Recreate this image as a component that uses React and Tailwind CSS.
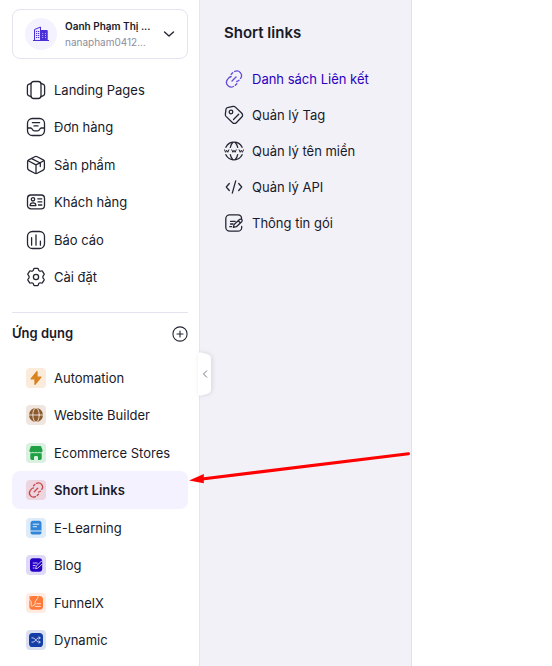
import React from "react";

function Icon({ children, size = "size-5", className = "" }) {
  return (
    <svg
      viewBox="0 0 20 20"
      fill="none"
      stroke="currentColor"
      strokeWidth="1.3"
      strokeLinecap="round"
      strokeLinejoin="round"
      className={`${size} shrink-0 ${className}`}
    >
      {children}
    </svg>
  );
}

const LinkShape = () => (
  <>
    <path d="M7.200 5.200 8.700 3.700M10.600 2.500a4.700 4.700 0 0 1 6 6.900M15 11.300a4.700 4.700 0 0 1-2.200 1.200" />
    <path d="M12.800 14.800 11.300 16.300M9.400 17.500a4.700 4.700 0 0 1-6-6.900L5 8.700a4.700 4.700 0 0 1 2.200-1.200" />
    <path d="m8 12 4-4" />
  </>
);

const NoteShape = () => (
  <>
    <path d="M17.600 5.500A3.800 3.800 0 0 0 13.900 1.800H5.700A3.900 3.900 0 0 0 1.800 5.700v8.600a3.900 3.900 0 0 0 3.900 3.900h8.200a3.800 3.800 0 0 0 3.800-3.800v-.9" />
    <path d="M6.500 8.300h4.700M6.500 11h2.500M5.800 13.700h1.800" />
    <path d="m9.400 14.300.7-2.900 5.400-4.900a1.500 1.500 0 0 1 2.200 2.200l-5.300 5-3 .6ZM14.200 7.800l2 2" />
  </>
);

const mainItems = [
  {
    label: "Landing Pages",
    icon: (
      <>
        <rect x="5" y="1.500" width="10" height="17" rx="2.800" />
        <path d="M5 3.300 2.600 4.300a2.100 2.100 0 0 0-1.200 1.900v7.600a2.100 2.100 0 0 0 1.200 1.900L5 16.700M15 3.300l2.400 1a2.100 2.100 0 0 1 1.200 1.900v7.600a2.100 2.100 0 0 1-1.200 1.900l-2.400 1" />
      </>
    ),
  },
  {
    label: "Đơn hàng",
    icon: (
      <>
        <rect x="1.500" y="1.500" width="17" height="17" rx="4.800" />
        <path d="M1.500 11h3.200c.8 0 1.200.5 1.600 1.200.5 1.100 1.100 1.700 2.100 1.700h3.200c1 0 1.600-.6 2.100-1.700.4-.7.800-1.200 1.600-1.200h3.200M6.400 5.700h7.200M8 8.900h4" />
      </>
    ),
  },
  {
    label: "Sản phẩm",
    icon: (
      <>
        <path d="M8.800 1.700a2.500 2.500 0 0 1 2.400 0l6 3.200a2.200 2.200 0 0 1 1.200 2v6.200a2.200 2.200 0 0 1-1.200 2l-6 3.200a2.500 2.500 0 0 1-2.400 0l-6-3.200a2.200 2.200 0 0 1-1.200-2V6.900a2.200 2.200 0 0 1 1.200-2z" />
        <path d="m2.200 5.700 7.800 4.200 7.800-4.200M10 9.900v8.400M5.700 3.600l8.600 4.400v3.600" />
      </>
    ),
  },
  {
    label: "Khách hàng",
    icon: (
      <>
        <rect x="1.500" y="3" width="17" height="13.800" rx="3.400" />
        <circle cx="7" cy="7.300" r="1.700" />
        <path d="M4.100 13.600c0-1.800 1-2.700 2.900-2.700s2.900.9 2.900 2.700zM11.800 6.800h4M12 9.900h3.800M12.500 13h3.300" />
      </>
    ),
  },
  {
    label: "Báo cáo",
    icon: (
      <>
        <rect x="1.500" y="1.500" width="17" height="17" rx="4.800" />
        <path d="M5.600 7.600v7.600M10 5v10.200M14.400 11.200v4" />
      </>
    ),
  },
  {
    label: "Cài đặt",
    icon: (
      <>
        <circle cx="10" cy="10" r="2.600" />
        <path d="M8.500 1.400h3c.5 0 .7.300.8.800.3 1.700 1.500 2.400 3.100 1.800.5-.2.900-.1 1.100.3l1.600 2.600c.2.500.1.800-.3 1.100-1.300 1.100-1.300 2.900 0 4 .4.300.5.600.3 1.100l-1.600 2.600c-.2.400-.6.500-1.100.3-1.600-.6-2.800.1-3.100 1.800-.1.500-.3.800-.8.800h-3c-.5 0-.7-.3-.8-.8-.3-1.700-1.500-2.400-3.100-1.800-.5.200-.9.100-1.100-.3l-1.600-2.600c-.2-.5-.1-.8.300-1.100 1.300-1.100 1.300-2.900 0-4-.4-.3-.5-.6-.3-1.100l1.600-2.600c.2-.4.600-.5 1.100-.3 1.600.6 2.800-.1 3.100-1.800.1-.5.300-.8.800-.8Z" />
      </>
    ),
  },
];

const appItems = [
  {
    label: "Automation",
    tile: "bg-[#faebda] text-[#d9821f]",
    icon: <path d="m11 3.700-5.900 7.100h3.900v5.500l5.900-7.100H11z" fill="currentColor" />,
  },
  {
    label: "Website Builder",
    tile: "bg-[#f0e6df] text-[#8d5a2e]",
    icon: (
      <>
        <circle cx="10" cy="10" r="7" fill="currentColor" stroke="none" />
        <g stroke="#f0e6df" strokeWidth="0.900">
          <ellipse cx="10" cy="10" rx="3.200" ry="7" />
          <path d="M3 10h14" />
        </g>
      </>
    ),
  },
  {
    label: "Ecommerce Stores",
    tile: "bg-[#daf0e0] text-[#1fa045]",
    icon: (
      <g fill="currentColor" stroke="none">
        <path d="M6 3h8c.8 0 1.200.4 1.400 1.100L16.500 7c.4 1.300-.5 2.500-1.800 2.500-.8 0-1.300-.3-1.600-.8-.3.500-.8.800-1.500.8s-1.300-.3-1.600-.8c-.3.500-.9.800-1.600.8s-1.200-.3-1.500-.8c-.3.500-.8.800-1.600.8C4 9.500 3.100 8.300 3.500 7l1.100-2.900C4.800 3.400 5.200 3 6 3Z" />
        <path d="M4.300 10.300c1.100.1 1.900 0 2.600-.5 1 .7 2.100.7 3.100 0 1 .7 2.100.7 3.100 0 .7.500 1.500.6 2.600.5v4.900c0 1.100-.6 1.700-1.700 1.700h-2v-2.600c0-.9-.7-1.400-2-1.400s-2 .5-2 1.400v2.600H6c-1.100 0-1.700-.6-1.700-1.700z" />
      </g>
    ),
  },
  {
    label: "Short Links",
    selected: true,
    tile: "bg-[#ecd5df] text-[#c8454b]",
    icon: <g strokeWidth="1.400" transform="translate(1.200 1.200) scale(.88)"><LinkShape /></g>,
  },
  {
    label: "E-Learning",
    tile: "bg-[#deebf8] text-[#3186d8]",
    icon: (
      <>
        <path d="M7 2.800h6a2.500 2.500 0 0 1 2.500 2.500v7.200h-11V5.300A2.500 2.500 0 0 1 7 2.800Z" fill="currentColor" stroke="none" />
        <path d="M4.500 13.600h11v.8a2 2 0 0 1-2 2h-7a2 2 0 0 1-2-2z" fill="currentColor" stroke="none" />
        <path d="M7.200 6.200h5.600M7.200 8.700h3.400" stroke="#deebf8" strokeWidth="1" />
      </>
    ),
  },
  {
    label: "Blog",
    tile: "bg-[#ded9f6] text-[#2600c4]",
    icon: (
      <>
        <rect x="4" y="3.200" width="12.200" height="13.600" rx="3" fill="currentColor" stroke="none" />
        <path d="M7.200 8h4M7.200 10.500h2M7.200 13h1" stroke="#ded9f6" strokeWidth="0.900" />
        <path d="m9.700 13.400.6-2.400 5-4.700 2 1.700-5.200 4.800z" stroke="#ded9f6" strokeWidth="0.900" fill="currentColor" />
      </>
    ),
  },
  {
    label: "FunnelX",
    tile: "bg-[#ffebe2] text-[#ff7a38]",
    icon: (
      <>
        <rect x="3.300" y="3" width="13.700" height="13.800" rx="3.500" fill="currentColor" stroke="none" />
        <path d="M2.700 3.400h8.500L8.600 7.700v3.100l-2.200 1.300V7.700z" fill="currentColor" stroke="none" />
        <path d="M2.600 5.500 5.200 8.900v3.700c0 .6.500.9 1 .6l2.900-1.800V8.800l2.500-3.600c.3-.5.400-1 .4-2.600" stroke="#ffebe2" strokeWidth="0.900" />
        <path d="M10.900 10.700h3.500M9.200 13.400h5.200" stroke="#ffebe2" strokeWidth="0.900" />
      </>
    ),
  },
  {
    label: "Dynamic",
    tile: "bg-[#dae0f0] text-[#143da8]",
    icon: (
      <>
        <rect x="3" y="3" width="14" height="14" rx="3.600" fill="currentColor" stroke="none" />
        <path d="M5.900 7.900h1.200c2.300 0 3 4.200 5.500 4.200h1.500M5.900 12.100h1.200c2.300 0 3-4.200 5.500-4.200h1.500M12.900 6.700l1.300 1.200-1.300 1.200M12.900 10.900l1.300 1.200-1.300 1.200" stroke="#dae0f0" strokeWidth="0.900" />
      </>
    ),
  },
];

const linkItems = [
  { label: "Danh sách Liên kết", active: true, icon: <LinkShape /> },
  {
    label: "Quản lý Tag",
    icon: (
      <>
        <path d="M3.500 2.600 9 1.400a2.600 2.600 0 0 1 2.400.7l6.400 6.200a2.600 2.600 0 0 1 0 3.700l-5.500 5.700a2.600 2.600 0 0 1-3.700 0L2 11.400A2.600 2.600 0 0 1 1.400 9L2 4.100a1.900 1.900 0 0 1 1.500-1.500Z" />
        <circle cx="7" cy="7" r="1.800" />
        <path d="m9.500 14.500 5.200-5.200" />
      </>
    ),
  },
  {
    label: "Quản lý tên miền",
    icon: (
      <>
        <path d="M1.900 6.300a9 9 0 0 1 16.200 0M1.900 13.700a9 9 0 0 0 16.200 0" />
        <path d="M6.300 6.300C6.800 4.200 7.700 2.500 8.700 1.500M13.700 6.300c-.5-2.100-1.400-3.800-2.400-4.800M6.300 13.700c.5 2.100 1.400 3.800 2.400 4.800M13.700 13.700c-.5 2.100-1.400 3.800-2.400 4.800" />
        <path d="m.5 8.800 1.100 2.500 1.100-2.100 1.100 2.100 1.100-2.500M7.800 8.800l1.100 2.500L10 9.200l1.100 2.100 1.100-2.500M15.100 8.800l1.100 2.500 1.100-2.100 1.100 2.100 1.100-2.500" strokeWidth="1" />
      </>
    ),
  },
  { label: "Quản lý API", icon: <path d="M5.300 6.500 2.300 10l3 3.500M14.700 6.500l3 3.500-3 3.500M11.700 3.800 8.300 16.200" /> },
  { label: "Thông tin gói", icon: <NoteShape /> },
];

function Row({ item }) {
  return (
    <a
      className={`flex h-[37.5px] items-center gap-2 rounded-lg pl-3.5 ${
        item.selected ? "bg-[#f4f2fe] font-semibold" : ""
      }`}
    >
      <Icon className={item.tile ? `rounded ${item.tile}` : "text-[#252633]"}>{item.icon}</Icon>
      <span>{item.label}</span>
    </a>
  );
}

export default function App() {
  return (
    <div className="relative flex h-[666px] w-[552px] overflow-hidden bg-white font-['Inter','Noto_Sans',sans-serif] text-[13px] leading-5 text-[#181a2a]">
      <aside className="w-[200px] shrink-0 border-r border-[#e5e5ed] pl-3 pr-[11px] pt-[9px]">
        <div className="flex h-[50px] items-center rounded-lg border border-[#e4e3f1] pl-3">
          <div className="flex size-8 shrink-0 items-center justify-center rounded-full bg-[#f4f2fe]">
            <svg viewBox="0 0 16 16" className="size-4 text-[#4a30d9]" fill="none" stroke="currentColor">
              <path d="M1.500 14V3.500L7.500 1v13" fill="#e9e4ff" />
              <path d="M7.500 4.500h6.700v10H7.500z" fill="currentColor" />
              <path d="M3 5.500h1.200M5 5.500h1.200M3 7.500h1.200M5 7.500h1.200M3 9.500h1.200M5 9.500h1.200M3 11.500h1.200M5 11.500h1.200M0 14.500h16" />
              <path d="M9.200 7.500h1M12 7.500h1M9.200 9.500h1M12 9.500h1M9.200 11.500h1M12 11.500h1" stroke="#bdb0ff" />
            </svg>
          </div>
          <div className="ml-2 w-[88px] whitespace-nowrap">
            <div className="text-[10px] font-semibold leading-4">Oanh Phạm Thị ...</div>
            <div className="text-[10px] leading-4 text-[#8c8e9f]">nanapham0412...</div>
          </div>
          <svg viewBox="0 0 12 12" className="ml-[10px] size-3" fill="none" stroke="#252633" strokeWidth="1.400" strokeLinecap="round" strokeLinejoin="round">
            <path d="m1.500 3.900 4.500 4 4.500-4" />
          </svg>
        </div>

        <nav className="mt-3">
          {mainItems.map((item) => <Row key={item.label} item={item} />)}
        </nav>

        <div className="mt-4 h-px bg-[#e4e3f1]" />
        <div className="flex h-[45.800px] items-center justify-between">
          <h2 className="pb-1.5 font-semibold">Ứng dụng</h2>
          <svg viewBox="0 0 16 16" className="mb-1 size-4" fill="none" stroke="#252633" strokeWidth="1.100" strokeLinecap="round">
            <circle cx="8" cy="8" r="7.100" />
            <path d="M8 5v6M5 8h6" />
          </svg>
        </div>
        <nav>
          {appItems.map((item) => <Row key={item.label} item={item} />)}
        </nav>
      </aside>

      <section className="w-[212px] shrink-0 border-r border-[#e2e1ea] bg-[#f2f1f7] pl-6 pt-[21px]">
        <h1 className="text-[15px] font-semibold leading-6">Short links</h1>
        <nav className="mt-4">
          {linkItems.map((item) => (
            <a key={item.label} className={`flex h-9 items-center gap-2 ${item.active ? "text-[#2b00c2]" : ""}`}>
              <Icon className={item.active ? "text-[#6348dc]" : "text-[#252633]"}>{item.icon}</Icon>
              <span>{item.label}</span>
            </a>
          ))}
        </nav>
      </section>

      <svg viewBox="0 0 20 50" className="absolute left-[198px] top-[349px] h-[50px] w-5 drop-shadow-[1px_0_2px_rgba(60,60,90,0.150)]" fill="none">
        <path d="M0 3.500c4 0 6 .5 10 2 2 .8 3 2 3 4.500v30c0 2.500-1 3.700-3 4.500-4 1.500-6 2-10 2z" fill="white" />
        <path d="m9 21.500-3.500 3.500L9 28.500" stroke="#777783" strokeWidth="1" />
      </svg>

      <svg viewBox="0 0 230 40" className="absolute left-[185px] top-[448px] h-10 w-[230px]">
        <path d="M17 31 223.500 5.700" stroke="#ff0000" strokeWidth="3" strokeLinecap="round" />
        <path d="M4 32.500 18.800 26v9.300z" fill="#ff0000" />
      </svg>
    </div>
  );
}
